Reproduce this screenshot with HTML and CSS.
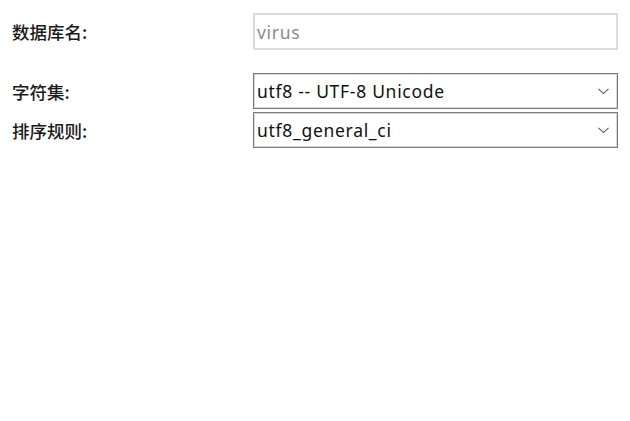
FILE: index.html
```html
<!DOCTYPE html>
<html lang="zh">
<head>
<meta charset="utf-8">
<link rel="stylesheet" href="styles.css">
</head>
<body>
<div class="form">
  <div class="row row-name">
    <div class="label">数据库名:</div>
    <div class="field input">virus</div>
  </div>
  <div class="row row-charset">
    <div class="label">字符集:</div>
    <div class="field select">
      <span class="value">utf8 -- UTF-8 Unicode</span>
      <svg class="chev" width="11" height="7" viewBox="0 0 11 7"><path d="M0.5 0.8 L5.5 5.6 L10.5 0.8" fill="none" stroke="#5a5a5a" stroke-width="1.1"/></svg>
    </div>
  </div>
  <div class="row row-collation">
    <div class="label">排序规则:</div>
    <div class="field select">
      <span class="value">utf8_general_ci</span>
      <svg class="chev" width="11" height="7" viewBox="0 0 11 7"><path d="M0.5 0.8 L5.5 5.6 L10.5 0.8" fill="none" stroke="#5a5a5a" stroke-width="1.1"/></svg>
    </div>
  </div>
</div>
</body>
</html>
```
FILE: styles.css
```css
html, body {
  margin: 0;
  padding: 0;
  background: #ffffff;
}
body {
  width: 630px;
  height: 421px;
  font-family: "Noto Sans", "Noto Sans CJK SC", sans-serif;
  font-size: 17.5px;
  color: #1a1a1a;
}
.form {
  padding: 13px 0 0 12px;
  display: flex;
  flex-direction: column;
}
.row {
  display: grid;
  grid-template-columns: 241px 365px;
  align-items: center;
}
.row-charset { margin-top: 23px; }
.row-collation { margin-top: 3px; }
.label {
  font-family: "Noto Sans CJK SC", sans-serif;
  font-size: 17.5px;
  font-weight: 500;
  color: #1a1a1a;
}
.field {
  box-sizing: border-box;
  display: flex;
  align-items: center;
  padding-left: 3px;
  letter-spacing: 0.7px;
}
.input {
  height: 37px;
  border: 2px solid #dcdcdc;
  color: #8c8c8c;
  padding-left: 2px;
}
.select {
  height: 36px;
  border: 1px solid #7a7a7a;
  box-shadow: inset 0 0 0 1px #d8d8d8;
  justify-content: space-between;
  padding-right: 8px;
  color: #111111;
}
.chev { display: block; }
```
